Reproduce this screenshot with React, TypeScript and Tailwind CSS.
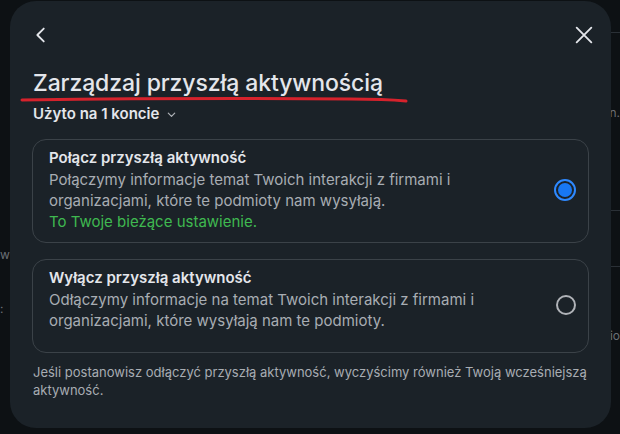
import React from 'react';

const font = { fontFamily: 'Inter, "Noto Sans", sans-serif' };

function Radio({ checked }: { checked: boolean }) {
  if (checked) {
    return (
      <div className="w-[22px] h-[22px] rounded-full border-2 border-[#2e89ff] flex items-center justify-center">
        <div className="w-[14px] h-[14px] rounded-full bg-[#1877f2]" />
      </div>
    );
  }
  return <div className="w-[20px] h-[20px] rounded-full border-2 border-[#b0b3b8]" />;
}

function OptionCard({
  title,
  lines,
  note,
  checked,
  tall,
}: {
  title: string;
  lines: string;
  note?: string;
  checked: boolean;
  tall?: boolean;
}) {
  return (
    <div
      className={`mx-[22px] rounded-[14px] border border-[#3b4248] pl-4 pr-[12px] pt-[8px] flex items-center gap-4 ${
        tall ? 'pb-[21px]' : 'pb-[10px]'
      }`}
    >
      <div className="flex-1">
        <div className="text-[15px] font-semibold text-[#e4e6eb] leading-[20px]">{title}</div>
        <div className="text-[15px] text-[#a8adb3] leading-[21px] mt-[1px] pr-[40px]">{lines}</div>
        {note && <div className="text-[15px] text-[#3fb950] leading-[21px]">{note}</div>}
      </div>
      <div className={`flex justify-center ${tall ? 'mt-[11px]' : ''}`}>
        <Radio checked={checked} />
      </div>
    </div>
  );
}

export default function App() {
  return (
    <div className="w-[620px] h-[434px] bg-[#0d1114] relative overflow-hidden" style={font}>
      {/* faint page behind the dialog */}
      <div className="absolute left-0 top-[246px] text-[12px] text-[#6b7075]">w</div>
      <div className="absolute left-0 top-[300px] text-[12px] text-[#6b7075]">:</div>
      <div className="absolute right-0 top-[104px] text-[12px] text-[#6b7075]">n.</div>
      <div className="absolute right-0 top-[327px] text-[12px] text-[#6b7075]">io</div>
      <div className="absolute right-0 top-[32px] w-[10px] h-px bg-[#2a3036]" />
      <div className="absolute right-0 top-[210px] w-[10px] h-px bg-[#2a3036]" />
      <div className="absolute right-0 top-[266px] w-[10px] h-px bg-[#2a3036]" />

      <div className="absolute left-[10px] top-[1px] w-[601px] h-[427px] rounded-[26px] bg-[#1b2228] flex flex-col">
        <div className="flex items-center justify-between pl-[20px] pr-[16px] pt-[22px] h-[46px]">
          <svg width="22" height="22" viewBox="0 0 24 24" fill="none" stroke="#e4e6eb" strokeWidth="2" strokeLinecap="round" strokeLinejoin="round">
            <path d="M15 5l-7 7 7 7" />
          </svg>
          <svg width="22" height="22" viewBox="0 0 24 24" fill="none" stroke="#e4e6eb" strokeWidth="2" strokeLinecap="round">
            <path d="M4 4l16 16M20 4L4 20" />
          </svg>
        </div>

        <div className="relative px-[23px] mt-[20px]">
          <h1 className="text-[23px] font-medium text-[#e4e6eb] leading-[32px] tracking-[-0.1px]">Zarządzaj przyszłą aktywnością</h1>
          <svg className="absolute left-[10px] top-[28px]" width="390" height="12" viewBox="0 0 390 12" fill="none">
            <path d="M2 5 C 80 4, 200 3, 330 4 C 360 4, 375 5, 386 6" stroke="#d6222c" strokeWidth="3" strokeLinecap="round" />
          </svg>
        </div>

        <div className="px-[23px] mt-[5px] flex items-center gap-[7px]">
          <span className="text-[15px] font-semibold text-[#e4e6eb] leading-[20px]">Użyto na 1 koncie</span>
          <svg width="11" height="11" viewBox="0 0 12 12" fill="none" stroke="#b0b3b8" strokeWidth="1.3" strokeLinecap="round" strokeLinejoin="round">
            <path d="M2.5 4.5L6 8l3.5-3.5" />
          </svg>
        </div>

        <div className="mt-[15px] flex flex-col gap-[16px]">
          <OptionCard
            title="Połącz przyszłą aktywność"
            lines="Połączymy informacje temat Twoich interakcji z firmami i organizacjami, które te podmioty nam wysyłają."
            note="To Twoje bieżące ustawienie."
            checked
          />
          <OptionCard
            title="Wyłącz przyszłą aktywność"
            lines="Odłączymy informacje na temat Twoich interakcji z firmami i organizacjami, które wysyłają nam te podmioty."
            checked={false}
            tall
          />
        </div>

        <p className="px-[23px] mt-[10px] text-[13px] leading-[18px] text-[#a8adb3]">
          Jeśli postanowisz odłączyć przyszłą aktywność, wyczyścimy również Twoją wcześniejszą aktywność.
        </p>
      </div>
    </div>
  );
}
